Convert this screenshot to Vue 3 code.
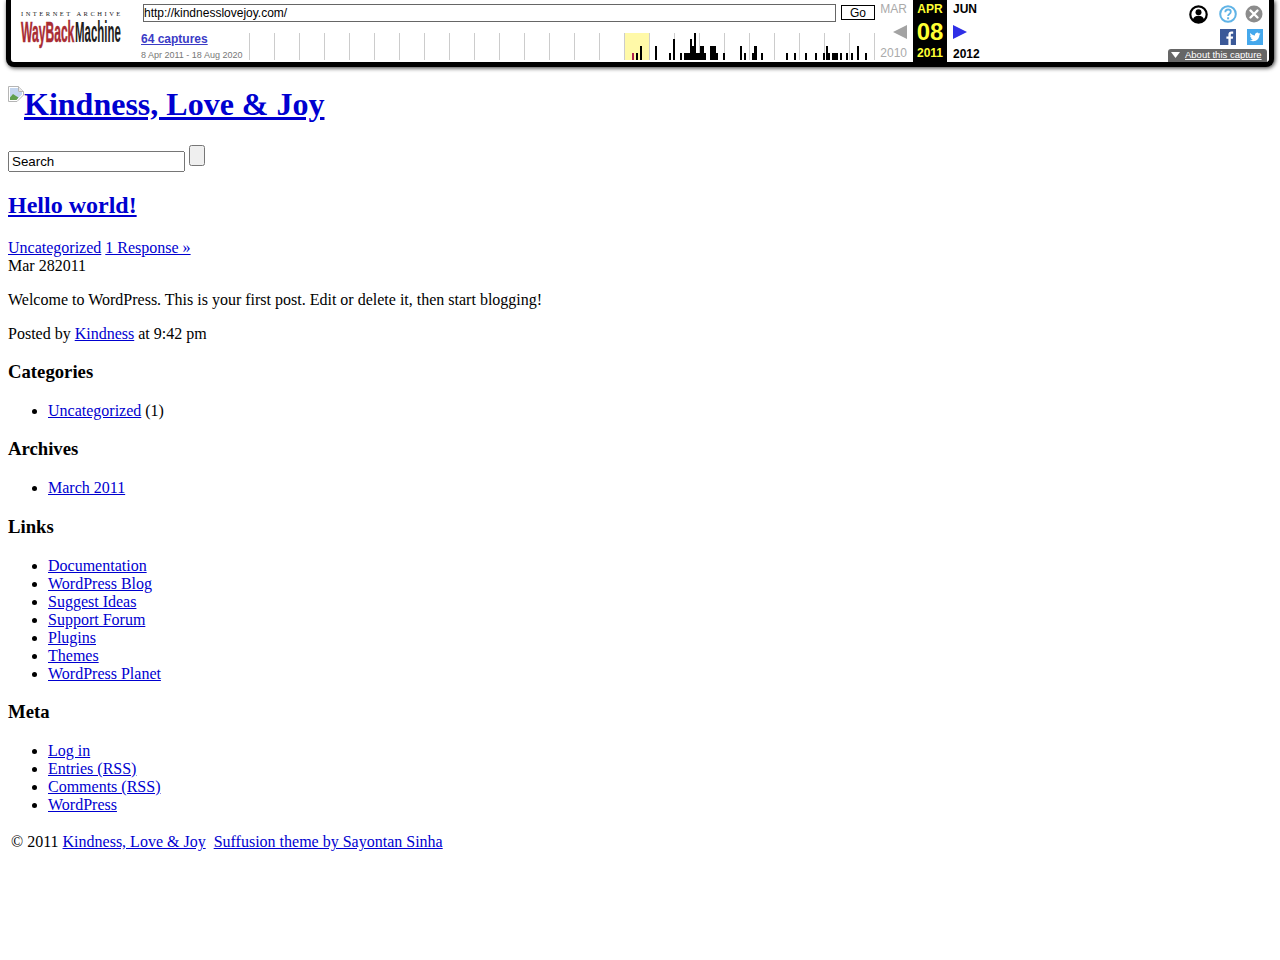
<script setup>
const yearLines = Array.from({ length: 26 }, (_, i) => i * 25 + 0.5)
const bars = [
  [632, 2, 53, '#b01e4f'], [636, 2, 53], [640, 2, 46], [655, 2, 46], [669, 2, 53], [673, 2, 39], [680, 2, 53],
  [684, 6, 53], [690, 2, 39], [692, 2, 46], [694, 2, 33], [696, 4, 53], [700, 4, 46], [704, 2, 53],
  [710, 6, 46], [716, 2, 53], [723, 2, 53], [740, 2, 46], [744, 2, 53], [752, 2, 53], [754, 3, 46], [761, 2, 53],
  [786, 2, 53], [794, 2, 53], [805, 2, 53], [815, 2, 53], [823, 2, 53], [826, 2, 46], [828, 2, 53], [832, 6, 53],
  [840, 2, 53], [846, 2, 53], [851, 2, 53], [857, 2, 46], [865, 2, 53]
]
const sideLists = [
  { title: 'Categories', items: [{ text: 'Uncategorized', after: ' (1)' }] },
  { title: 'Archives', items: [{ text: 'March 2011' }] },
  {
    title: 'Links',
    items: ['Documentation', 'WordPress Blog', 'Suggest Ideas', 'Support Forum', 'Plugins', 'Themes', 'WordPress Planet'].map((text) => ({ text }))
  },
  { title: 'Meta', items: ['Log in', 'Entries (RSS)', 'Comments (RSS)', 'WordPress'].map((text) => ({ text })) }
]
</script>

<template>
  <div class="toolbar">
    <div class="logo-col">
      <a href="#" class="logo-link">
        <div class="logo-top">INTERNET ARCHIVE</div>
        <div class="logo-main">
          <span class="logo-way"><span class="logo-squeeze way">WayBack</span></span>
          <span class="logo-mach"><span class="logo-squeeze mach">Machine</span></span>
        </div>
      </a>
    </div>

    <div class="center-col">
      <form class="url-row" @submit.prevent>
        <input class="url-input" value="http://kindnesslovejoy.com/" />
        <button class="go" type="button">Go</button>
      </form>
      <div class="spark-row">
        <div class="captures">
          <a href="#" class="cap-link">64 captures</a>
          <div class="cap-dates">8 Apr 2011 - 18 Aug 2020</div>
        </div>
        <svg class="spark" width="626" height="29" viewBox="249 32 626 29">
          <rect x="625" y="33" width="25" height="27" fill="#fff9a8" />
          <rect v-for="x in yearLines" :key="x" :x="249 + x - 0.5" y="33" width="1" height="27" fill="#ccc" />
          <rect v-for="b in bars" :key="b[0]" :x="b[0]" :y="b[2]" :width="b[1]" :height="60 - b[2]" :fill="b[3] || '#000'" />
        </svg>
      </div>
    </div>

    <div class="cal">
      <div class="cal-col prev">
        <a href="#" class="cal-month">MAR</a>
        <svg class="cal-arrow" width="14" height="14" viewBox="0 0 14 14"><path d="M14 0V14L0 7Z" fill="#a3a3a3" /></svg>
        <a href="#" class="cal-year">2010</a>
      </div>
      <div class="cal-col cur">
        <span class="cal-month">APR</span>
        <span class="cal-day">08</span>
        <span class="cal-year">2011</span>
      </div>
      <div class="cal-col next">
        <a href="#" class="cal-month">JUN</a>
        <svg class="cal-arrow" width="14" height="14" viewBox="0 0 14 14"><path d="M0 0V14L14 7Z" fill="#2f2fe6" /></svg>
        <a href="#" class="cal-year">2012</a>
      </div>
    </div>

    <div class="right-col">
      <div class="icons-row">
        <svg width="19" height="19" viewBox="0 0 19 19">
          <circle cx="9.5" cy="9.5" r="8.2" fill="#fff" stroke="#000" stroke-width="2.2" />
          <circle cx="9.5" cy="7.2" r="3" fill="#000" />
          <path d="M3.8 15c.6-3 2.8-4.3 5.7-4.3s5.100 1.300 5.700 4.300a8 8 0 0 1-11.400 0Z" fill="#000" />
        </svg>
        <svg class="ic-help" width="18" height="18" viewBox="0 0 18 18">
          <circle cx="9" cy="9" r="7.800" fill="#fff" stroke="#5fb3e6" stroke-width="2" />
          <path d="M6.300 7.200c0-1.800 1.200-2.700 2.800-2.700s2.700 1 2.700 2.300c0 2.200-2.700 2.100-2.700 4.200" fill="none" stroke="#5fb3e6" stroke-width="1.800" />
          <rect x="8.100" y="12.300" width="2" height="2" fill="#5fb3e6" />
        </svg>
        <svg class="ic-close" width="18" height="18" viewBox="0 0 18 18">
          <circle cx="9" cy="9" r="8.500" fill="#8c8c8c" />
          <path d="M5.500 5.500l7 7M12.500 5.500l-7 7" stroke="#fff" stroke-width="2.400" stroke-linecap="round" />
        </svg>
      </div>
      <div class="share-row">
        <svg width="16" height="16" viewBox="0 0 16 16">
          <rect width="16" height="16" fill="#3b5998" />
          <path d="M10.800 16V9.800h2l.3-2.400h-2.300V5.900c0-.7.200-1.200 1.200-1.200h1.200V2.600c-.2 0-.9-.1-1.800-.1-1.800 0-3 1.100-3 3.100v1.800h-2v2.400h2V16Z" fill="#fff" />
        </svg>
        <svg width="16" height="16" viewBox="0 0 16 16">
          <rect width="16" height="16" fill="#45a8ec" />
          <path d="M13.500 4.600c-.4.200-.8.300-1.300.4.500-.3.800-.7 1-1.200-.4.300-.9.500-1.400.6a2.200 2.200 0 0 0-3.800 2c-1.900-.1-3.500-1-4.600-2.400-.6 1-.3 2.300.7 3-.4 0-.7-.1-1-.3 0 1.100.8 2 1.800 2.200-.3.100-.7.100-1 0 .3.900 1.100 1.500 2.100 1.500-.9.700-2.100 1.100-3.300.9 1 .6 2.100 1 3.400 1 4.100 0 6.400-3.400 6.300-6.500.5-.3.900-.7 1.100-1.200Z" fill="#fff" />
        </svg>
      </div>
      <a href="#" class="about"><svg class="about-tri" width="9" height="6" viewBox="0 0 9 6"><path d="M0 0H9L4.500 6Z" fill="#fff" /></svg><span class="about-text">About this capture</span></a>
    </div>
  </div>

  <div class="page">
    <h1 class="site-title">
      <a href="#">
        <svg class="broken" width="16" height="16" viewBox="0 0 16 16">
          <path d="M.5.500H10.500L15.500 5.500V9L9 15.500H.5Z" fill="#fff" stroke="#b5b5b5" />
          <path d="M2 2H10V6H14V8.500L8.500 14H2Z" fill="#c3d5ee" />
          <path d="M2 14V11.500L5 8 8 10 10.500 11.500 8.500 14Z" fill="#5f9f4c" />
          <path d="M10.500.500V5.500H15.500" fill="#e8e8e8" stroke="#b5b5b5" />
        </svg>Kindness, Love &amp; Joy</a>
    </h1>

    <form class="search" @submit.prevent>
      <input class="search-input" value="Search" />
      <input class="search-btn" type="submit" value="" />
    </form>

    <h2 class="post-title"><a href="#">Hello world!</a></h2>
    <div><a href="#">Uncategorized</a> <a href="#">1 Response »</a></div>
    <div>Mar 282011</div>
    <p>Welcome to WordPress. This is your first post. Edit or delete it, then start blogging!</p>
    <p>Posted by <a href="#">Kindness</a> at 9:42 pm</p>

    <section v-for="list in sideLists" :key="list.title" class="side">
      <h3>{{ list.title }}</h3>
      <ul>
        <li v-for="item in list.items" :key="item.text"><a href="#">{{ item.text }}</a>{{ item.after }}</li>
      </ul>
    </section>

    <div class="footer">
      © 2011 <a href="#">Kindness, Love &amp; Joy</a><span class="foot-gap"></span><a href="#">Suffusion theme by Sayontan Sinha</a>
    </div>
  </div>
</template>

<style>
body {
  margin: 0;
  background: #fff;
}
</style>

<style scoped>
.toolbar {
  display: flex;
  height: 62px;
  margin: 0 6px;
  border: 5px solid #000;
  border-top: none;
  border-radius: 0 0 8px 8px;
  background: #fff;
  box-shadow: 1px 1px 4px #333;
  font-family: "Liberation Sans", Arial, sans-serif;
}
.logo-col {
  width: 130px;
  padding: 10px 0 0 10px;
  box-sizing: border-box;
  flex: none;
}
.logo-link {
  display: block;
  text-decoration: none;
}
.logo-top {
  font-family: "Liberation Serif", serif;
  font-size: 6.500px;
  line-height: 7px;
  letter-spacing: 2.500px;
  color: #222;
  white-space: nowrap;
}
.logo-main {
  display: flex;
  height: 27px;
  margin-top: 2px;
}
.logo-way {
  display: block;
  width: 54px;
}
.logo-mach {
  display: block;
  width: 46px;
}
.logo-squeeze {
  display: block;
  font-family: "Liberation Sans", sans-serif;
  font-size: 29px;
  line-height: 27px;
  white-space: nowrap;
  transform-origin: 0 0;
}
.way {
  width: 129px;
  font-weight: 700;
  color: #a92c33;
  -webkit-text-stroke: 0.500px #a92c33;
  transform: scaleX(0.417);
}
.mach {
  width: 116px;
  font-weight: 700;
  color: #1d1d1d;
  transform: scaleX(0.395);
}
.center-col {
  width: 734px;
  flex: none;
}
.url-row {
  display: flex;
  align-items: center;
  height: 25px;
  padding: 0 0 0 2px;
  margin: 0;
}
.url-input {
  width: 693px;
  height: 18px;
  box-sizing: border-box;
  border: 1px solid #666;
  padding: 0;
  font: 12px "Liberation Sans", Arial, sans-serif;
  color: #000;
  margin-top: 0;
}
.go {
  width: 34px;
  height: 15px;
  box-sizing: border-box;
  margin-left: 5px;
  border: 1px solid #000;
  background: #fff;
  padding: 0;
  font: 12px "Liberation Sans", Arial, sans-serif;
  color: #000;
}
.spark-row {
  display: flex;
  justify-content: space-between;
  margin-top: 7px;
}
.captures {
  width: 106px;
}
.cap-link {
  display: block;
  font-size: 12px;
  font-weight: 700;
  line-height: 14px;
  color: #3b3bc6;
  text-decoration: underline;
}
.cap-dates {
  margin-top: 4px;
  font-size: 9px;
  line-height: 11px;
  color: #777;
  white-space: nowrap;
}
.spark {
  display: block;
  flex: none;
}
.cal {
  display: flex;
  flex: none;
  height: 62px;
}
.cal-col {
  display: flex;
  flex-direction: column;
  box-sizing: border-box;
  height: 62px;
  font-size: 12px;
  line-height: 14px;
}
.cal-col a {
  color: inherit;
  text-decoration: none;
}
.cal-month {
  margin-top: 2px;
}
.cal-year {
  margin-top: auto;
  margin-bottom: 2px;
}
.cal-arrow {
  margin-top: 9px;
}
.prev {
  width: 38px;
  padding-right: 6px;
  align-items: flex-end;
  color: #aaa;
}
.cur {
  width: 34px;
  align-items: center;
  background: #000;
  color: #ff3;
  font-weight: 700;
}
.cal-day {
  font-size: 24px;
  line-height: 28px;
  margin-top: 2px;
}
.cur .cal-year {
  margin-bottom: 3px;
}
.next {
  width: 60px;
  padding-left: 6px;
  align-items: flex-start;
  color: #000;
  font-weight: 700;
}
.next .cal-year {
  margin-bottom: 1px;
}
.right-col {
  flex: 1;
  display: flex;
  flex-direction: column;
  align-items: flex-end;
  height: 62px;
}
.icons-row {
  display: flex;
  align-items: center;
  height: 18px;
  margin: 5px 6px 0 0;
}
.icons-row svg {
  display: block;
}
.ic-help {
  margin-left: 11px;
}
.ic-close {
  margin-left: 8px;
}
.share-row {
  display: flex;
  gap: 11px;
  margin: 6px 6px 0 0;
}
.share-row svg {
  display: block;
}
.about {
  display: flex;
  align-items: center;
  width: 99px;
  height: 13px;
  box-sizing: border-box;
  margin-top: auto;
  margin-right: 2px;
  padding: 0 0 2px 3px;
  border-radius: 3px 3px 0 0;
  background: #666;
  color: #fff;
  font-size: 9.500px;
  line-height: 11px;
  text-decoration: none;
  white-space: nowrap;
}
.about-tri {
  flex: none;
  margin-right: 5px;
}
.about-text {
  text-decoration: underline;
}

.page {
  padding: 0 8px;
  font-family: "Liberation Serif", "Times New Roman", serif;
  font-size: 16px;
  color: #000;
}
.page a {
  color: #0000d0;
}
.site-title {
  margin: 19px 0 21.900px;
  font-size: 32px;
}
.broken {
  display: inline-block;
  vertical-align: top;
}
.search {
  display: flex;
  align-items: flex-start;
  gap: 4px;
  height: 27px;
  margin: 0;
}
.search-input {
  width: 177px;
  height: 21px;
  box-sizing: border-box;
  margin: 6px 0 0;
  font: 13.333px "Liberation Sans", Arial, sans-serif;
}
.search-btn {
  width: 16px;
  height: 21px;
  box-sizing: border-box;
  margin: 0;
  font: 13.333px "Liberation Sans", Arial, sans-serif;
}
.post-title {
  margin: 19.920px 0;
  font-size: 24px;
}
.side:first-of-type h3 {
  margin-top: 18.240px;
}
.footer {
  margin-top: 18.700px;
  padding-left: 3px;
}
.foot-gap {
  display: inline-block;
  width: 8px;
}
</style>
